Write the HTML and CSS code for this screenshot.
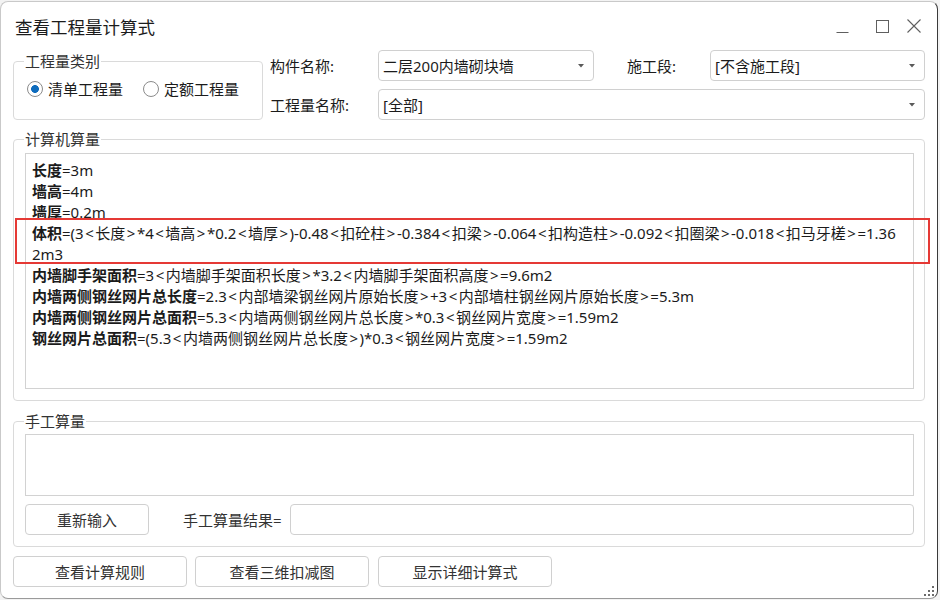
FILE: index.html
```html
<!DOCTYPE html>
<html lang="zh-CN">
<head>
<meta charset="utf-8">
<title>查看工程量计算式</title>
<link rel="stylesheet" href="styles.css">
</head>
<body>
<div class="window">
  <div class="titlebar">
    <span class="title">查看工程量计算式</span>
    <div class="controls">
      <svg class="ctl ctl-min" width="13" height="13" viewBox="0 0 13 13"><path d="M0.5 11.5H12.5" stroke="#5f5f5f" stroke-width="1" fill="none"/></svg>
      <svg class="ctl ctl-max" width="13" height="13" viewBox="0 0 13 13"><rect x="0.5" y="0.5" width="12" height="12" stroke="#5f5f5f" stroke-width="1" fill="none"/></svg>
      <svg class="ctl ctl-close" width="14" height="14" viewBox="0 0 14 14"><path d="M0.5 0.5L13.5 13.5M13.5 0.5L0.5 13.5" stroke="#5f5f5f" stroke-width="1.1" fill="none"/></svg>
    </div>
  </div>

  <div class="content">
    <div class="top">
      <fieldset class="group type-group">
        <legend>工程量类别</legend>
        <div class="radio-row">
          <label class="radio checked"><span class="dot"></span>清单工程量</label>
          <label class="radio"><span class="dot"></span>定额工程量</label>
        </div>
      </fieldset>

      <div class="fields">
        <div class="field-row">
          <span class="flabel">构件名称:</span>
          <div class="combo combo-a"><span class="ctext">二层200内墙砌块墙</span><svg class="arrow" width="6" height="4" viewBox="0 0 6 4"><path d="M0 0H6L3 3.5Z" fill="#5a5a5a"/></svg></div>
          <span class="flabel flabel2">施工段:</span>
          <div class="combo combo-b"><span class="ctext">[不含施工段]</span><svg class="arrow" width="6" height="4" viewBox="0 0 6 4"><path d="M0 0H6L3 3.5Z" fill="#5a5a5a"/></svg></div>
        </div>
        <div class="field-row">
          <span class="flabel">工程量名称:</span>
          <div class="combo combo-b"><span class="ctext">[全部]</span><svg class="arrow" width="6" height="4" viewBox="0 0 6 4"><path d="M0 0H6L3 3.5Z" fill="#5a5a5a"/></svg></div>
        </div>
      </div>
    </div>

    <fieldset class="group calc-group">
      <legend>计算机算量</legend>
      <div class="textbox">
        <p class="line"><b>长度</b>=3m</p>
        <p class="line"><b>墙高</b>=4m</p>
        <p class="line"><b>墙厚</b>=0.2m</p>
        <p class="line highlight"><b>体积</b>=(3<span class="ab">&lt;</span>长度<span class="ab">&gt;</span>*4<span class="ab">&lt;</span>墙高<span class="ab">&gt;</span>*0.2<span class="ab">&lt;</span>墙厚<span class="ab">&gt;</span>)-0.48<span class="ab">&lt;</span>扣砼柱<span class="ab">&gt;</span>-0.384<span class="ab">&lt;</span>扣梁<span class="ab">&gt;</span>-0.064<span class="ab">&lt;</span>扣构造柱<span class="ab">&gt;</span>-0.092<span class="ab">&lt;</span>扣圈梁<span class="ab">&gt;</span>-0.018<span class="ab">&lt;</span>扣马牙槎<span class="ab">&gt;</span>=1.36<span class="tail">2m3</span></p>
        <p class="line"><b>内墙脚手架面积</b>=3<span class="ab">&lt;</span>内墙脚手架面积长度<span class="ab">&gt;</span>*3.2<span class="ab">&lt;</span>内墙脚手架面积高度<span class="ab">&gt;</span>=9.6m2</p>
        <p class="line"><b>内墙两侧钢丝网片总长度</b>=2.3<span class="ab">&lt;</span>内部墙梁钢丝网片原始长度<span class="ab">&gt;</span>+3<span class="ab">&lt;</span>内部墙柱钢丝网片原始长度<span class="ab">&gt;</span>=5.3m</p>
        <p class="line"><b>内墙两侧钢丝网片总面积</b>=5.3<span class="ab">&lt;</span>内墙两侧钢丝网片总长度<span class="ab">&gt;</span>*0.3<span class="ab">&lt;</span>钢丝网片宽度<span class="ab">&gt;</span>=1.59m2</p>
        <p class="line"><b>钢丝网片总面积</b>=(5.3<span class="ab">&lt;</span>内墙两侧钢丝网片总长度<span class="ab">&gt;</span>)*0.3<span class="ab">&lt;</span>钢丝网片宽度<span class="ab">&gt;</span>=1.59m2</p>
      </div>
    </fieldset>

    <fieldset class="group manual-group">
      <legend>手工算量</legend>
      <div class="manual-area"></div>
      <div class="manual-row">
        <button class="btn btn-reset" type="button">重新输入</button>
        <span class="result-label">手工算量结果=</span>
        <div class="result-input"></div>
      </div>
    </fieldset>

    <div class="actions">
      <button class="btn btn-action" type="button">查看计算规则</button>
      <button class="btn btn-action" type="button">查看三维扣减图</button>
      <button class="btn btn-action" type="button">显示详细计算式</button>
    </div>
  </div>

  <svg class="grip" width="11" height="11" viewBox="0 0 11 11">
    <rect x="8" y="0" width="2" height="2" fill="#6b6b6b"/>
    <rect x="4" y="4" width="2" height="2" fill="#6b6b6b"/>
    <rect x="8" y="4" width="2" height="2" fill="#6b6b6b"/>
    <rect x="0" y="8" width="2" height="2" fill="#6b6b6b"/>
    <rect x="4" y="8" width="2" height="2" fill="#6b6b6b"/>
    <rect x="8" y="8" width="2" height="2" fill="#6b6b6b"/>
  </svg>
</div>
</body>
</html>
```

FILE: styles.css
```css
* { box-sizing: border-box; }

html, body {
  margin: 0;
  padding: 0;
  background: #f3f3f3;
}

body {
  font-family: "Noto Sans", "Noto Sans CJK SC", sans-serif;
  color: #1b1b1b;
  font-size: 15px;
}

.window {
  position: relative;
  width: 938px;
  height: 598px;
  margin-top: 1px;
  background: #ffffff;
  border: 1px solid #c9c9c9;
  border-right-color: #3a3a3a;
  border-bottom-color: #9a9a9a;
  border-radius: 8px;
  display: flex;
  flex-direction: column;
}

/* title bar */
.titlebar {
  height: 48px;
  flex-shrink: 0;
  display: flex;
  align-items: center;
  justify-content: space-between;
  padding: 2px 16px 0 14px;
}

.title {
  font-size: 17.5px;
  line-height: 24px;
  color: #1b1b1b;
}

.controls {
  display: flex;
  align-items: center;
  margin-top: -2px;
}

.ctl { display: block; }
.ctl-min { margin-top: 2px; }
.ctl-max { margin-left: 27px; }
.ctl-close { margin-left: 18px; }

/* content */
.content {
  padding: 0 12px;
  display: flex;
  flex-direction: column;
}

.top {
  display: flex;
  align-items: flex-start;
  gap: 7px;
}

.group {
  margin: 0;
  min-width: 0;
  border: 1px solid #dadada;
  border-radius: 4px;
  padding: 0;
}

.group legend {
  margin-left: -1px;
  padding: 0 1px;
  font-size: 15px;
  line-height: 20px;
  color: #333333;
}

.type-group {
  width: 250px;
  flex-shrink: 0;
  margin-top: 1px;
  padding: 8px 0 20px 13px;
}

.type-group legend { margin-left: -3px; }

.radio-row {
  display: flex;
  gap: 20px;
}

.radio {
  display: flex;
  align-items: center;
  gap: 5px;
  font-size: 15px;
  line-height: 20px;
  color: #1b1b1b;
}

.dot {
  width: 16px;
  height: 16px;
  border: 1px solid #8b8b8b;
  border-radius: 50%;
  background: #ffffff;
}

.radio.checked .dot {
  background: radial-gradient(circle, #0f6cbd 0, #0f6cbd 3.6px, #ffffff 4.2px);
}

.fields {
  flex: 1;
  display: flex;
  flex-direction: column;
  gap: 8px;
}

.field-row {
  display: flex;
  align-items: center;
  height: 31px;
}

.flabel {
  width: 108px;
  flex-shrink: 0;
  font-size: 15px;
  color: #1b1b1b;
}

.flabel2 {
  width: 83px;
  margin-left: 33px;
}

.combo {
  height: 31px;
  border: 1px solid #d0d0d0;
  border-radius: 4px;
  background: #ffffff;
  display: flex;
  align-items: center;
  padding: 0 9px 0 4px;
  font-size: 15px;
}

.combo-a { width: 216px; flex-shrink: 0; }
.combo-b { flex: 1; }

.ctext { flex: 1; white-space: nowrap; }
.arrow { display: block; }

/* computer calc group */
.calc-group {
  margin-top: 9px;
  padding: 4px 10px 11px 11px;
}

.textbox {
  height: 236px;
  border: 1px solid #d2d2d2;
  background: #ffffff;
  padding: 6px 10px 0 6px;
}

.line {
  margin: 0;
  font-size: 15px;
  line-height: 21px;
  word-break: break-all;
  color: #1b1b1b;
}

.line b { font-weight: 700; }

.ab { padding: 0 1.5px; }

.highlight { position: relative; }

.highlight::before {
  content: "";
  position: absolute;
  left: -17px;
  right: -27px;
  top: -5px;
  bottom: 1px;
  border: 2px solid #e53935;
  pointer-events: none;
}

/* manual group */
.manual-group {
  margin-top: 10px;
  padding: 3px 10px 11px 11px;
}

.manual-area {
  height: 62px;
  border: 1px solid #d2d2d2;
  background: #ffffff;
}

.manual-row {
  display: flex;
  align-items: center;
  margin-top: 8px;
  height: 31px;
}

.btn {
  font-family: inherit;
  font-size: 15px;
  color: #333333;
  background: #ffffff;
  border: 1px solid #d0d0d0;
  border-radius: 4px;
  height: 31px;
  padding: 0;
  display: flex;
  align-items: center;
  justify-content: center;
}

.btn-reset { width: 124px; }

.result-label {
  margin-left: 34px;
  width: 107px;
  font-size: 15px;
  color: #333333;
  white-space: nowrap;
}

.result-input {
  flex: 1;
  height: 31px;
  border: 1px solid #d0d0d0;
  border-radius: 4px;
  background: #ffffff;
}

.actions {
  display: flex;
  gap: 8px;
  margin-top: 9px;
}

.btn-action { width: 174px; }
.btn-action:last-child { margin-left: 1px; }

.grip {
  position: absolute;
  right: 2px;
  bottom: 1px;
}
```
